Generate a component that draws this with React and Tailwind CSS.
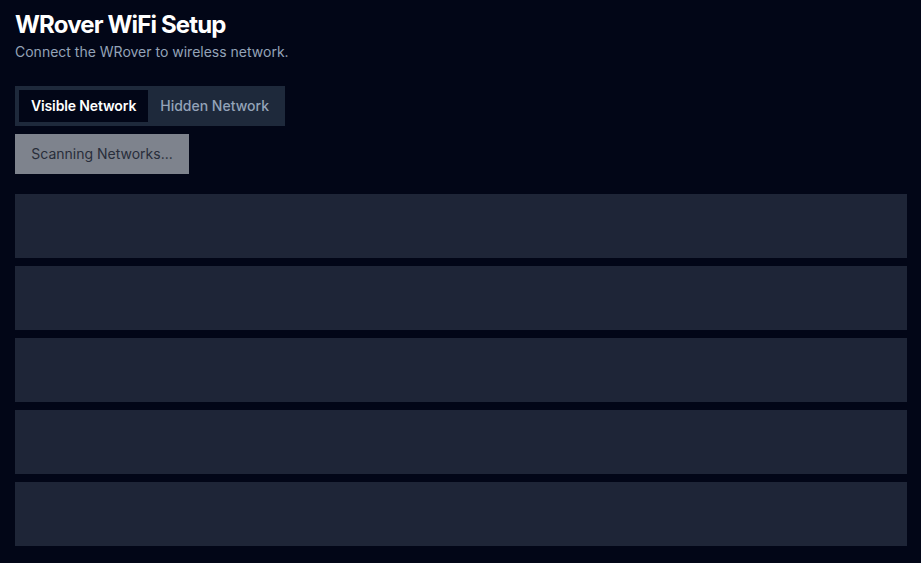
import React, { useState } from 'react';

const WifiSetup = () => {
    const [tab, setTab] = useState('visible');
    const placeholders = [0, 1, 2, 3, 4];

    return (
        <div className="min-h-screen bg-[#020617] pl-[15px] pr-[14px] pt-[9px] pb-4 font-['Inter',sans-serif]">
            <h1 className="text-2xl leading-8 font-bold tracking-[-0.035em] text-white">WRover WiFi Setup</h1>
            <p className="mt-[1px] text-sm leading-5 text-[#94a3b8]">Connect the WRover to wireless network.</p>

            <div className="mt-[24px] inline-flex bg-[#1e293b] p-1">
                <button
                    onClick={() => setTab('visible')}
                    className={`h-8 px-3 text-sm tracking-[-0.01em] ${tab === 'visible' ? 'bg-[#020617] text-white font-semibold' : 'text-[#94a3b8] font-medium'}`}
                >
                    Visible Network
                </button>
                <button
                    onClick={() => setTab('hidden')}
                    className={`h-8 px-3 text-sm ${tab === 'hidden' ? 'bg-[#020617] text-white font-semibold' : 'text-[#94a3b8] font-medium'}`}
                >
                    Hidden Network
                </button>
            </div>

            <div className="mt-2">
                <button disabled className="h-10 w-[174px] bg-[#7e838d] text-sm text-[#282d3a]">
                    Scanning Networks...
                </button>
            </div>

            {/* loading placeholders */}
            <div className="mt-5 flex flex-col gap-2">
                {placeholders.map(i => (
                    <div key={i} className="h-16 w-full bg-[#1e2537]" />
                ))}
            </div>
        </div>
    );
};

export default function App() {
    return <WifiSetup />;
}
